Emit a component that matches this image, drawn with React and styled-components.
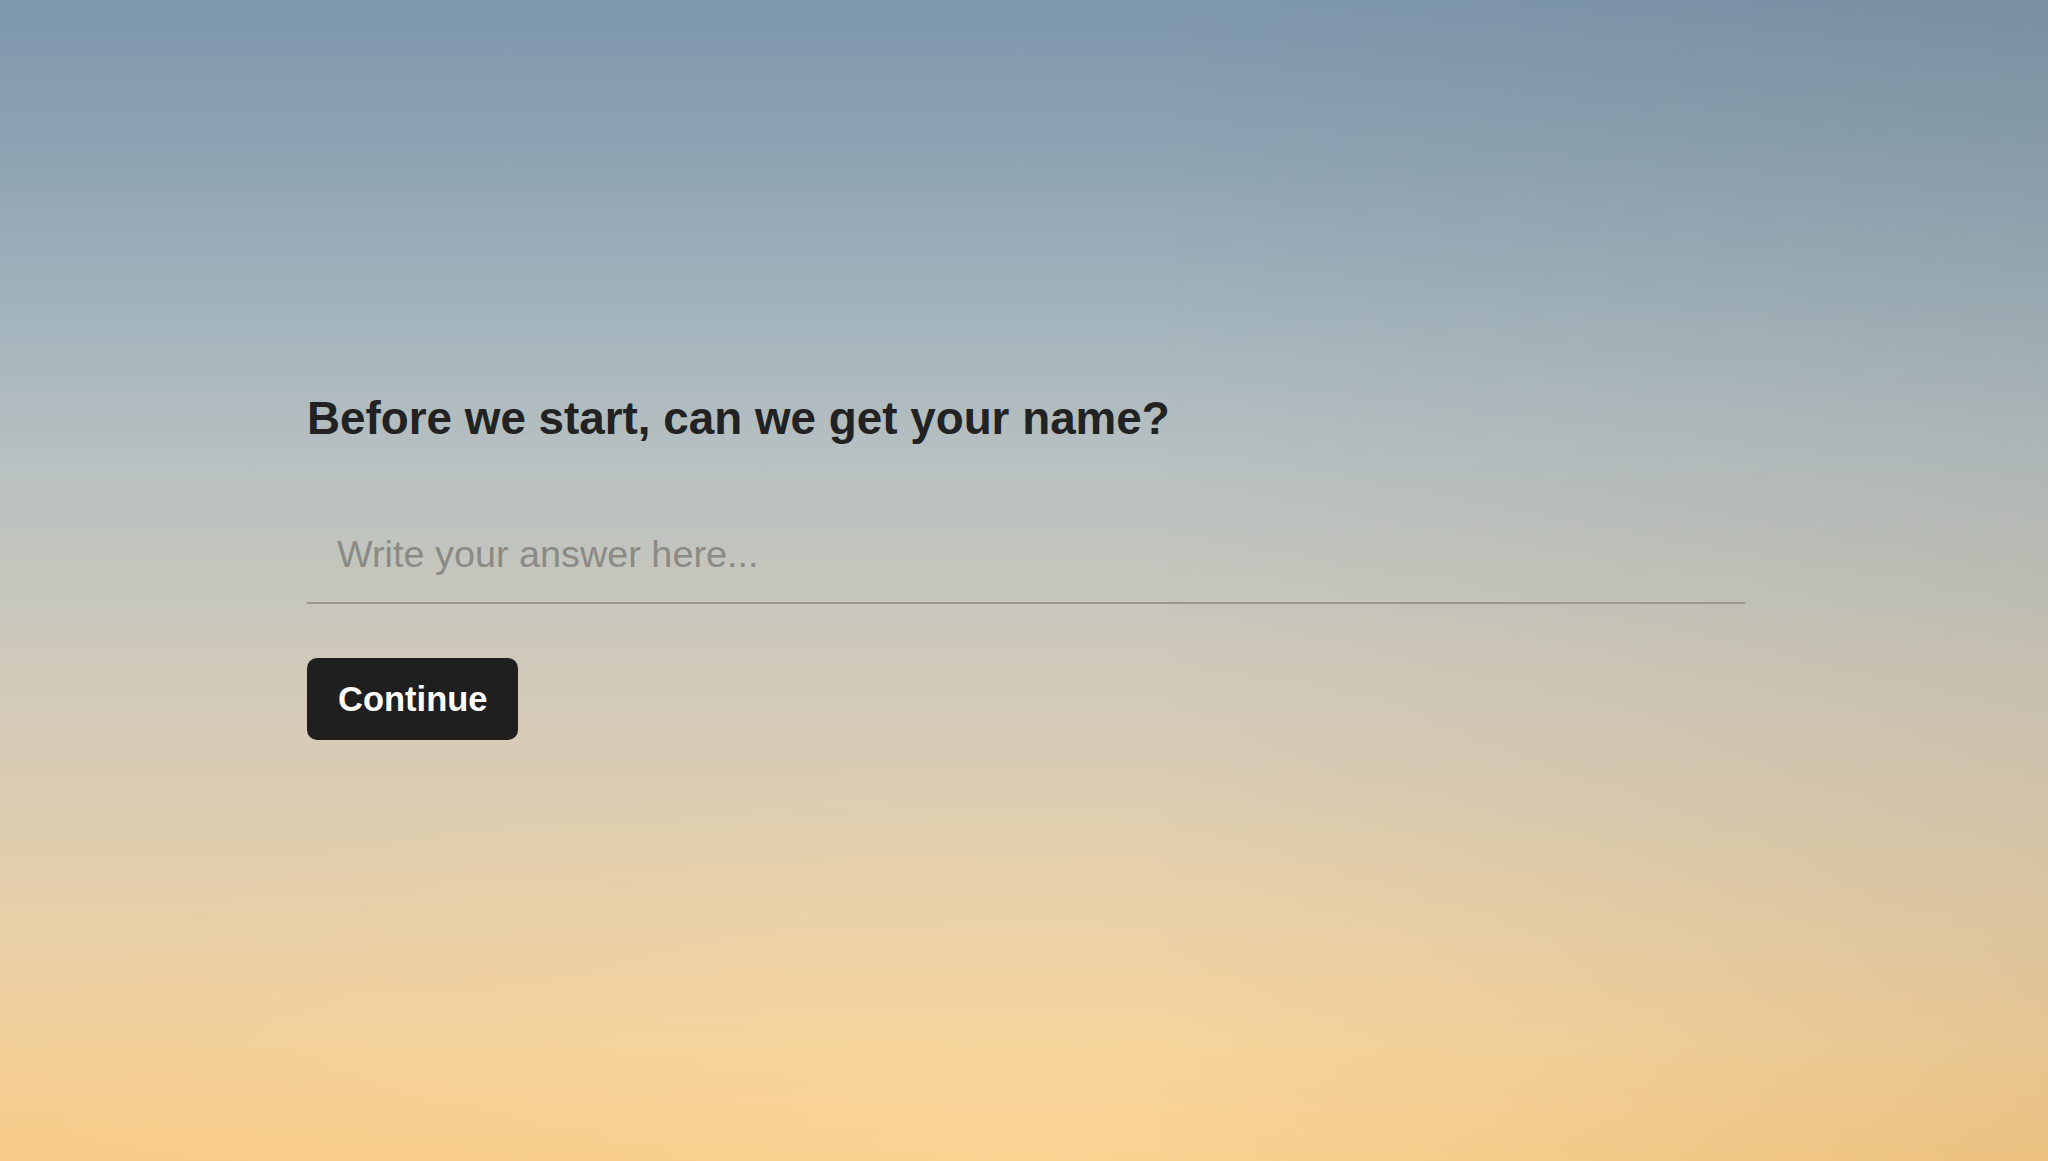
import React, { useState } from 'react';
import styled, { createGlobalStyle } from 'styled-components';

const GlobalStyle = createGlobalStyle`
  html, body {
    margin: 0;
    padding: 0;
    height: 100%;
  }
  body {
    font-family: 'Liberation Sans', Arial, sans-serif;
  }
  * {
    box-sizing: border-box;
  }
`;

function App() {
  const [name, setName] = useState('');

  return (
    <>
      <GlobalStyle />
      <Sky>
        <Form onSubmit={e => e.preventDefault()}>
          <Question>Before we start, can we get your name?</Question>
          <AnswerInput
            type="text"
            value={name}
            onChange={e => setName(e.target.value)}
            placeholder="Write your answer here..."
          />
          <ContinueButton type="submit">Continue</ContinueButton>
        </Form>
      </Sky>
    </>
  );
}

const Sky = styled.div`
  min-height: 100vh;
  padding: 393px 303px 0 307px;
  background:
    radial-gradient(ellipse 55% 35% at 50% 100%, rgba(255, 224, 165, 0.4), rgba(255, 224, 165, 0) 100%),
    linear-gradient(to right, rgba(30, 30, 10, 0) 55%, rgba(30, 30, 10, 0.06) 100%),
    linear-gradient(
      to bottom,
      #7e97ab 0%,
      #90a5b4 15%,
      #a8b7be 30%,
      #b8c0c1 40%,
      #c5c6bd 50%,
      #d3cab9 60%,
      #ddcdb1 70%,
      #e8cfa7 80%,
      #f2cf99 90%,
      #f8c986 100%
    );
`;

const Form = styled.form`
  display: flex;
  flex-direction: column;
  align-items: flex-start;
`;

const Question = styled.h1`
  margin: 0;
  font-size: 45.8px;
  font-weight: 700;
  line-height: normal;
  color: #222222;
`;

const AnswerInput = styled.input`
  width: 100%;
  margin-top: 62px;
  padding: 26px 30px;
  border: none;
  border-bottom: 2px solid #9b978f;
  border-radius: 0;
  outline: none;
  background: transparent;
  font-family: 'Liberation Sans', Arial, sans-serif;
  font-size: 37.8px;
  line-height: normal;
  color: #222222;

  &::placeholder {
    color: #8b8a85;
  }
`;

const ContinueButton = styled.button`
  display: flex;
  align-items: center;
  justify-content: center;
  height: 82px;
  margin-top: 54px;
  padding: 0 31px;
  border: none;
  border-radius: 10px;
  background: #1f1f1f;
  color: #ffffff;
  font-family: 'Liberation Sans', Arial, sans-serif;
  font-size: 34.5px;
  font-weight: 700;
  cursor: pointer;
`;

export default App;
